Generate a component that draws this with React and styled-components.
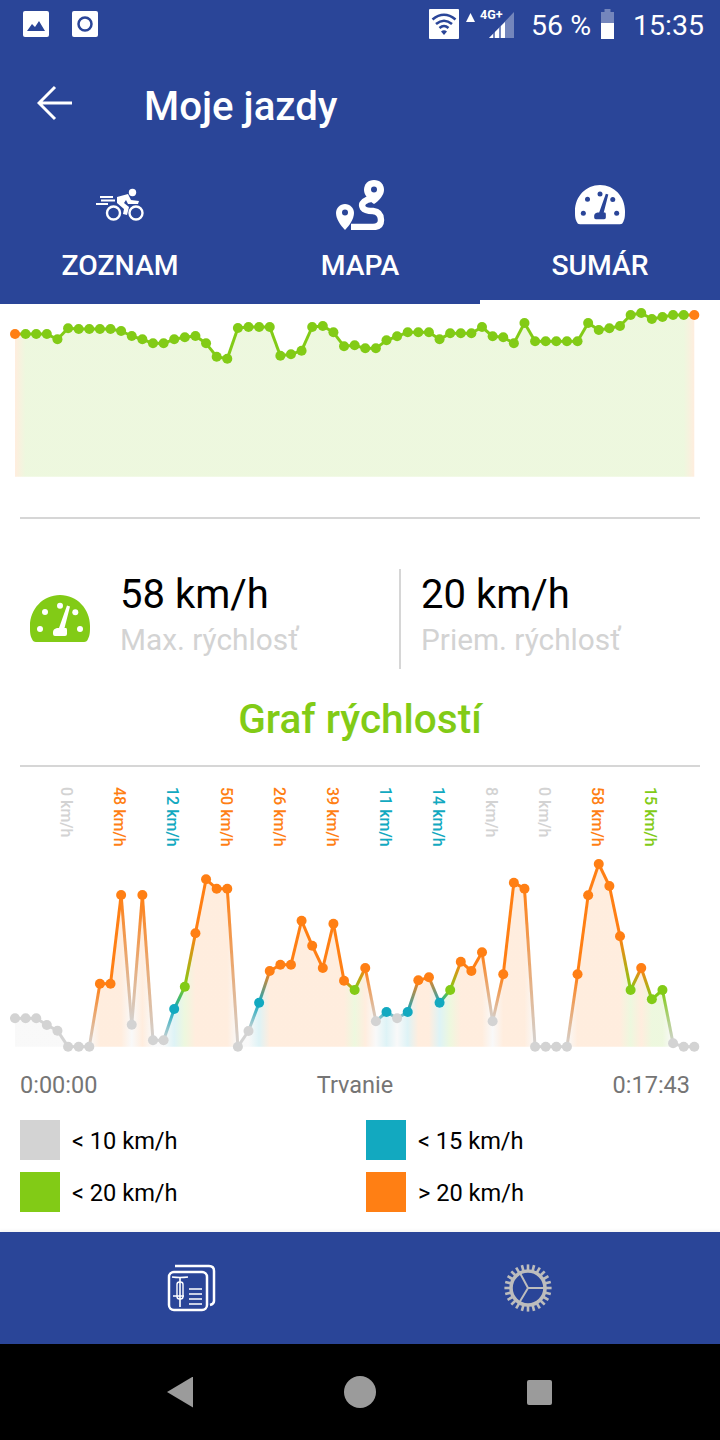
import React from "react";
import styled, { createGlobalStyle } from "styled-components";

const BLUE = "#2a4598";
const GRAY = "#d3d3d3";
const GREEN = "#82cb16";
const TEAL = "#12a9c0";
const ORANGE = "#ff7f14";

const GlobalStyle = createGlobalStyle`
  html, body {
    margin: 0;
    padding: 0;
    background: #fff;
    font-family: Roboto, "Liberation Sans", sans-serif;
  }
`;

const Page = styled.div`
  width: 720px;
  height: 1440px;
  display: flex;
  flex-direction: column;
  overflow: hidden;
  background: #fff;
`;

const StatusBar = styled.div`
  height: 48px;
  flex: none;
  background: ${BLUE};
  display: flex;
  align-items: center;
  justify-content: space-between;
  padding: 0 16px 0 23px;
  color: #fff;
`;
const StatusLeft = styled.div`
  display: flex;
  gap: 23px;
  align-items: center;
`;
const StatusRight = styled.div`
  display: flex;
  align-items: center;
`;
const StatusText = styled.span`
  font-size: 28.5px;
  line-height: 48px;
  margin-left: ${(p) => p.$left}px;
  margin-top: 4px;
`;
const Net = styled.div`
  position: relative;
  width: 48px;
  height: 30px;
  margin-left: 7px;
`;
const NetLabel = styled.span`
  position: absolute;
  left: 14px;
  top: 0;
  font-size: 12.5px;
  line-height: 12px;
  font-weight: 700;
`;

const Header = styled.div`
  height: 116px;
  flex: none;
  background: ${BLUE};
  display: flex;
  align-items: center;
  padding-left: 37px;
`;
const BackIcon = styled.svg`
  width: 36px;
  height: 36px;
  margin: -6px 71px 0 0;
`;
const Title = styled.h1`
  margin: 0;
  font-size: 40.2px;
  font-weight: 500;
  color: #fff;
`;

const Tabs = styled.div`
  height: 140px;
  flex: none;
  background: ${BLUE};
  display: flex;
`;
const Tab = styled.div`
  flex: 1;
  box-sizing: border-box;
  padding-top: 16px;
  display: flex;
  flex-direction: column;
  align-items: center;
  color: #fff;
  border-bottom: 4px solid ${(p) => (p.$active ? "#fff" : "transparent")};
`;
const TabIcon = styled.div`
  height: 50px;
  display: flex;
  align-items: center;
  justify-content: center;
`;
const TabLabel = styled.div`
  margin-top: 19px;
  font-size: 28.3px;
  line-height: 33px;
  font-weight: 500;
`;

const Main = styled.main`
  flex: 1;
  min-height: 0;
  display: flex;
  flex-direction: column;
`;
const ChartSvg = styled.svg`
  display: block;
  flex: none;
  width: 720px;
`;
const Rule = styled.hr`
  margin: ${(p) => p.$top || 0}px 20px 0;
  border: 0;
  height: 2px;
  background: #d6d6d6;
`;
const Stats = styled.div`
  display: flex;
  align-items: stretch;
  height: 100px;
  margin-top: 50px;
  padding-left: 30px;
`;
const StatIcon = styled.div`
  width: 90px;
  padding-top: 26px;
`;
const Stat = styled.div`
  flex: ${(p) => (p.$grow ? 1 : "none")};
  width: ${(p) => (p.$grow ? "auto" : "279px")};
  padding-left: ${(p) => (p.$grow ? "20px" : 0)};
  border-left: ${(p) => (p.$grow ? "2px solid #d6d6d6" : "none")};
`;
const StatValue = styled.div`
  font-size: 40px;
  line-height: 52px;
  color: #000;
`;
const StatLabel = styled.div`
  font-size: 29.8px;
  line-height: 40px;
  margin-top: -1px;
  color: ${GRAY};
`;
const GraphTitle = styled.h2`
  margin: 0;
  height: 96px;
  line-height: 100px;
  text-align: center;
  font-size: 40.5px;
  font-weight: 500;
  color: ${GREEN};
`;
const Axis = styled.div`
  display: flex;
  justify-content: space-between;
  padding: 0 30px 0 20px;
  font-size: 23.5px;
  line-height: 30px;
  color: #757575;
`;
const Legend = styled.div`
  display: grid;
  grid-template-columns: 346px 1fr;
  row-gap: 12px;
  margin-top: 20px;
  padding-left: 20px;
`;
const LegendItem = styled.div`
  display: flex;
  align-items: center;
  font-size: 23.6px;
  color: #000;
`;
const LegendText = styled.span`
  margin-top: 2px;
`;
const Swatch = styled.span`
  width: 40px;
  height: 40px;
  margin-right: 12px;
  background: ${(p) => p.$color};
`;

const BottomNav = styled.nav`
  height: 112px;
  flex: none;
  background: ${BLUE};
  display: flex;
  box-shadow: 0 -2px 3px rgba(0, 0, 0, 0.04);
`;
const NavItem = styled.div`
  flex: 1;
  box-sizing: border-box;
  display: flex;
  align-items: center;
  justify-content: center;
  padding: ${(p) => (p.$right ? "0 24px 0 0" : "0 0 0 22px")};
`;
const SystemNav = styled.div`
  height: 96px;
  flex: none;
  background: #000;
  display: flex;
  align-items: center;
  justify-content: space-between;
  padding: 0 168px 0 167px;
`;
const SysBack = styled.div`
  width: 26px;
  height: 31px;
  background: #9b9b9b;
  clip-path: polygon(100% 0, 100% 100%, 0 50%);
`;
const SysHome = styled.div`
  width: 32px;
  height: 32px;
  border-radius: 50%;
  background: #9b9b9b;
`;
const SysRecent = styled.div`
  width: 25px;
  height: 25px;
  border-radius: 2px;
  background: #9b9b9b;
`;

const STEP = (694.3 - 15) / 64;
const px = (i) => 15 + i * STEP;

// y values read off the chart, in thirds of a pixel
const summaryY = [
  102, 102, 102, 102, 118, 85, 87, 87, 87, 87, 93, 108, 118, 130, 130, 118, 112, 108, 130, 170, 176, 84, 81, 81, 81, 167,
  163, 152, 81, 78, 97, 139, 136, 145, 145, 121, 109, 97, 97, 97, 118, 100, 100, 100, 81, 109, 112, 130, 69, 124, 124,
  124, 124, 124, 69, 90, 85, 78, 45, 39, 57, 51, 45, 45, 45,
];
const summary = summaryY.map((z, i) => ({
  x: px(i),
  y: z / 3 - 4,
  color: i === 0 || i === 64 ? ORANGE : GREEN,
}));

const g = GRAY, o = ORANGE, t = TEAL, l = GREEN;
const speedRaw = [
  [715, g], [715, g], [715, g], [735, g], [752, g], [800, g], [800, g], [800, g], [611, o], [611, o], [345, o], [734, g],
  [345, o], [781, g], [781, g], [687, t], [620, l], [460, o], [298, o], [326, o], [326, o], [800, g], [753, g], [668, t],
  [573, o], [554, o], [554, o], [422, o], [497, o], [564, o], [431, o], [602, o], [630, l], [564, o], [724, g], [696, t],
  [715, g], [696, t], [601, o], [592, o], [668, t], [630, l], [545, o], [573, o], [517, o], [724, g], [583, o], [308, o],
  [326, o], [800, g], [800, g], [800, g], [800, g], [583, o], [346, o], [252, o], [318, o], [469, o], [630, l], [564, o],
  [658, l], [630, l], [790, g], [800, g], [800, g],
];
const speed = speedRaw.map(([z, color], i) => ({ x: px(i), y: z / 3 + 13, color }));

const labels = [
  ["0 km/h", g], ["48 km/h", o], ["12 km/h", t], ["50 km/h", o], ["26 km/h", o], ["39 km/h", o],
  ["11 km/h", t], ["14 km/h", t], ["8 km/h", g], ["0 km/h", g], ["58 km/h", o], ["15 km/h", l],
];

const legend = [
  ["< 10 km/h", GRAY],
  ["< 15 km/h", TEAL],
  ["< 20 km/h", GREEN],
  ["> 20 km/h", ORANGE],
];

const LineChart = ({ id, points, height, base, fade, children }) => {
  const first = points[0];
  const last = points[points.length - 1];
  const line = points.map((p) => `${p.x},${p.y}`).join(" ");
  const area = `${first.x},${base} ${line} ${last.x},${base}`;
  return (
    <ChartSvg height={height} viewBox={`0 0 720 ${height}`}>
      <defs>
        <linearGradient id={`${id}-area`} gradientUnits="userSpaceOnUse" x1={first.x} y1="0" x2={last.x} y2="0">
          {points.map((p, i) => (
            <stop key={i} offset={(p.x - first.x) / (last.x - first.x)} stopColor={p.color} stopOpacity={fade} />
          ))}
        </linearGradient>
        {points.slice(1).map((p, i) => (
          <linearGradient
            key={i}
            id={`${id}-seg-${i}`}
            gradientUnits="userSpaceOnUse"
            x1={points[i].x}
            y1={points[i].y}
            x2={p.x}
            y2={p.y + 0.01}
          >
            <stop offset="0" stopColor={points[i].color} />
            <stop offset="1" stopColor={p.color} />
          </linearGradient>
        ))}
      </defs>
      <polygon points={area} fill={`url(#${id}-area)`} />
      {points.slice(1).map((p, i) => (
        <line
          key={i}
          x1={points[i].x}
          y1={points[i].y}
          x2={p.x}
          y2={p.y}
          stroke={`url(#${id}-seg-${i})`}
          strokeWidth="3"
        />
      ))}
      {points.map((p, i) => (
        <circle key={i} cx={p.x} cy={p.y} r="5" fill={p.color} />
      ))}
      {children}
    </ChartSvg>
  );
};

const Gauge = ({ width, height, color, mark }) => (
  <svg width={width} height={height} viewBox="0 0 60 48">
    <path
      d="M30 0C47 0 60 14 60 31C60 37 60 40 58 44Q57 47 54 47L6 47Q3 47 2 44C0 40 0 37 0 31C0 14 13 0 30 0Z"
      fill={color}
    />
    <g fill={mark}>
      <circle cx="15" cy="17" r="3" />
      <circle cx="30" cy="10.7" r="3" />
      <circle cx="45.3" cy="17.3" r="3" />
      <circle cx="10" cy="34" r="3" />
      <circle cx="50" cy="34" r="3" />
      <path d="M37 10.5L40 11.5L34.5 33H36Q37 33 37 35V39Q37 41 35 41H25Q23 41 23 39V37Q23 34 27 33H29Z" />
    </g>
  </svg>
);

const RiderIcon = () => (
  <svg width="50" height="40" viewBox="0 0 50 40" fill="none">
    <circle cx="37.5" cy="7.5" r="3.7" fill="#fff" />
    <circle cx="18.5" cy="28" r="6.5" stroke="#fff" strokeWidth="2.4" />
    <circle cx="41" cy="28" r="6.5" stroke="#fff" strokeWidth="2.4" />
    <path d="M5 12H18M6 15.5H20M1 19H13" stroke="#fff" strokeWidth="2.2" />
    <path d="M22 12L33 9L36 15L44 16L43 19L33 19L31 15L29 18L34 22L32 30L28 29L29 24L22 18Z" fill="#fff" />
  </svg>
);

const RouteIcon = () => (
  <svg width="50" height="50" viewBox="0 0 50 50" fill="none">
    <path d="M39 0C45 0 49 4 49 10C49 15 44 21 39 24C34 21 29 15 29 10C29 4 33 0 39 0Z" fill="#fff" />
    <circle cx="39" cy="9.5" r="3" fill={BLUE} />
    <path d="M36 19L32 20Q25 23 28 28Q30 31 38 31Q46 32 46 40Q46 47 38 47L16 47" stroke="#fff" strokeWidth="6.4" />
    <path d="M10 24C15 24 19 28 19 33C19 39 14 46 10 50C6 46 1 39 1 33C1 28 5 24 10 24Z" fill="#fff" />
    <circle cx="10" cy="32.5" r="3" fill={BLUE} />
  </svg>
);

const gearTeeth = Array.from({ length: 24 }, (_, i) => (i * 360) / 24);
const GearIcon = () => (
  <svg width="50" height="50" viewBox="-25 -25 50 50" fill="none" stroke="#bdbdbd">
    <circle r="17" strokeWidth="3.6" />
    {gearTeeth.map((a) => (
      <line key={a} x1="18" y1="0" x2="23.6" y2="0" strokeWidth="2.6" transform={`rotate(${a})`} />
    ))}
    <path d="M0 0L17 0M0 0L-8 -15M0 0L-9 15" strokeWidth="2" />
  </svg>
);

const RidesIcon = () => (
  <svg width="50" height="50" viewBox="0 0 50 50" fill="none" stroke="#fff">
    <rect x="3" y="9" width="38" height="38" rx="5" strokeWidth="2.5" />
    <path d="M9 3H43Q48 3 48 8V38Q48 41 44 42" strokeWidth="2.5" />
    <path d="M6 14Q14 15 22 14M14 15V44M7 33H18" strokeWidth="1.6" />
    <rect x="11" y="19" width="6" height="17" rx="2.5" strokeWidth="1.4" />
    <path d="M23 26H36M23 31H36M23 36H36M23 41H36" strokeWidth="1.6" />
  </svg>
);

const App = () => (
  <Page>
    <GlobalStyle />
    <StatusBar>
      <StatusLeft>
        <svg width="26" height="26" viewBox="0 0 26 26">
          <rect width="26" height="26" rx="2" fill="#fff" />
          <path d="M4 20L9 13L12 16L16 10L22 20Z" fill={BLUE} />
        </svg>
        <svg width="26" height="26" viewBox="0 0 26 26">
          <rect width="26" height="26" rx="2" fill="#fff" />
          <circle cx="13" cy="13" r="6.5" fill="none" stroke={BLUE} strokeWidth="2.5" />
        </svg>
      </StatusLeft>
      <StatusRight>
        <svg width="30" height="30" viewBox="0 0 30 30" fill="none">
          <rect width="30" height="30" rx="1" fill="#fff" />
          <path d="M3.5 10.5Q15 1 26.5 10.5M7 15Q15 8.5 23 15M10.5 19Q15 15 19.5 19" stroke={BLUE} strokeWidth="2.6" />
          <path d="M12 22.5Q15 20 18 22.5L15 26Z" fill={BLUE} />
        </svg>
        <Net>
          <svg width="48" height="30" viewBox="0 0 48 30" style={{ display: "block" }}>
            <path d="M0 13L4.5 4L9 13Z" fill="#fff" />
            <path d="M23 29L48 3V29Z" fill="#fff" fillOpacity="0.35" />
            <path d="M23 29L27 25V29ZM29 29V23L33 19V29ZM35 29V17L39 13V29Z" fill="#fff" />
          </svg>
          <NetLabel>4G+</NetLabel>
        </Net>
        <StatusText $left={17}>56 %</StatusText>
        <svg width="13" height="30" viewBox="0 0 13 30" style={{ marginLeft: 10 }}>
          <path d="M0 3H3.5V0H9.5V3H13V14H0Z" fill="#fff" fillOpacity="0.35" />
          <rect y="14" width="13" height="16" fill="#fff" />
        </svg>
        <StatusText $left={19}>15:35</StatusText>
      </StatusRight>
    </StatusBar>

    <Header>
      <BackIcon viewBox="0 0 36 36" fill="none" stroke="#fff" strokeWidth="3">
        <path d="M35 18H4M18 2L2 18L18 34" />
      </BackIcon>
      <Title>Moje jazdy</Title>
    </Header>

    <Tabs>
      <Tab>
        <TabIcon>
          <RiderIcon />
        </TabIcon>
        <TabLabel>ZOZNAM</TabLabel>
      </Tab>
      <Tab>
        <TabIcon>
          <RouteIcon />
        </TabIcon>
        <TabLabel>MAPA</TabLabel>
      </Tab>
      <Tab $active>
        <TabIcon>
          <Gauge width={50} height={40} color="#fff" mark={BLUE} />
        </TabIcon>
        <TabLabel>SUMÁR</TabLabel>
      </Tab>
    </Tabs>

    <Main>
      <LineChart id="sum" points={summary} height={176} base={172.7} fade={0.14} />
      <Rule $top={37} />
      <Stats>
        <StatIcon>
          <Gauge width={60} height={48} color={GREEN} mark="#fff" />
        </StatIcon>
        <Stat>
          <StatValue>58 km/h</StatValue>
          <StatLabel>Max. rýchlosť</StatLabel>
        </Stat>
        <Stat $grow>
          <StatValue>20 km/h</StatValue>
          <StatLabel>Priem. rýchlosť</StatLabel>
        </Stat>
      </Stats>
      <GraphTitle>Graf rýchlostí</GraphTitle>
      <Rule />
      <LineChart id="spd" points={speed} height={303} base={279.7} fade={0.14}>
        {labels.map(([text, color], i) => {
          const x = 66.7 + i * 53.1;
          return (
            <text
              key={i}
              x={x}
              y={20}
              transform={`rotate(90 ${x} 20)`}
              dominantBaseline="central"
              fontFamily="Roboto, sans-serif"
              fontSize="16"
              fontWeight="500"
              fill={color}
            >
              {text}
            </text>
          );
        })}
      </LineChart>
      <Axis>
        <span>0:00:00</span>
        <span>Trvanie</span>
        <span>0:17:43</span>
      </Axis>
      <Legend>
        {legend.map(([text, color]) => (
          <LegendItem key={text}>
            <Swatch $color={color} />
            <LegendText>{text}</LegendText>
          </LegendItem>
        ))}
      </Legend>
    </Main>

    <BottomNav>
      <NavItem>
        <RidesIcon />
      </NavItem>
      <NavItem $right>
        <GearIcon />
      </NavItem>
    </BottomNav>

    <SystemNav>
      <SysBack />
      <SysHome />
      <SysRecent />
    </SystemNav>
  </Page>
);

export default App;
